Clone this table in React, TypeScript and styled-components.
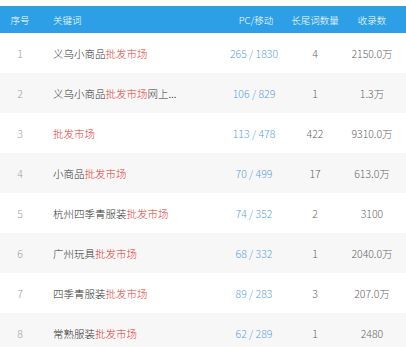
import * as React from 'react';
import styled, { createGlobalStyle } from 'styled-components';

const GlobalStyle = createGlobalStyle`
  body {
    margin: 0;
    background: #ffffff;
    font-family: "Noto Sans CJK SC", "Noto Sans", sans-serif;
  }
`;

interface Row {
  prefix: string;
  suffix?: string;
  pc: number;
  mobile: number;
  longTail: number;
  indexed: string;
}

const rows: Row[] = [
  { prefix: '义乌小商品', pc: 265, mobile: 1830, longTail: 4, indexed: '2150.0万' },
  { prefix: '义乌小商品', suffix: '网上...', pc: 106, mobile: 829, longTail: 1, indexed: '1.3万' },
  { prefix: '', pc: 113, mobile: 478, longTail: 422, indexed: '9310.0万' },
  { prefix: '小商品', pc: 70, mobile: 499, longTail: 17, indexed: '613.0万' },
  { prefix: '杭州四季青服装', pc: 74, mobile: 352, longTail: 2, indexed: '3100' },
  { prefix: '广州玩具', pc: 68, mobile: 332, longTail: 1, indexed: '2040.0万' },
  { prefix: '四季青服装', pc: 89, mobile: 283, longTail: 3, indexed: '207.0万' },
  { prefix: '常熟服装', pc: 62, mobile: 289, longTail: 1, indexed: '2480' },
];

const Page = styled.div`
  padding-top: 6px;
  width: 406px;
`;

const Grid = styled.div`
  display: grid;
  grid-template-columns: 40px 180px 72px 46px 68px;
  align-items: center;
  font-weight: 300;
`;

const Header = styled(Grid)`
  height: 27px;
  background: #2d9fe6;
  color: #ffffff;
  font-size: 9.5px;
`;

const HeadCell = styled.div<{ $left?: boolean }>`
  display: flex;
  justify-content: ${p => (p.$left ? 'flex-start' : 'center')};
  padding-left: ${p => (p.$left ? '13px' : '0')};
  white-space: nowrap;
`;

const BodyRow = styled(Grid)<{ $striped: boolean }>`
  height: 40px;
  background: ${p => (p.$striped ? '#f7f7f7' : '#ffffff')};
  font-size: 10.5px;
`;

const Index = styled.div`
  text-align: center;
  color: #a0a0a0;
`;

const Keyword = styled.div`
  padding-left: 13px;
  color: #333333;
  white-space: nowrap;
`;

const Highlight = styled.span`
  color: #e5352f;
`;

const Traffic = styled.div`
  text-align: center;
  color: #5c9fdc;
  padding-right: 4px;
  white-space: nowrap;
`;

const Count = styled.div`
  text-align: center;
  color: #666666;
  white-space: nowrap;
`;

const App = () => (
  <Page>
    <GlobalStyle />
    <Header>
      <HeadCell>序号</HeadCell>
      <HeadCell $left>关键词</HeadCell>
      <HeadCell>PC/移动</HeadCell>
      <HeadCell>长尾词数量</HeadCell>
      <HeadCell>收录数</HeadCell>
    </Header>
    {rows.map((r, i) => (
      <BodyRow key={i} $striped={i % 2 === 1}>
        <Index>{i + 1}</Index>
        <Keyword>
          {r.prefix}
          <Highlight>批发市场</Highlight>
          {r.suffix}
        </Keyword>
        <Traffic>{r.pc} / {r.mobile}</Traffic>
        <Count>{r.longTail}</Count>
        <Count>{r.indexed}</Count>
      </BodyRow>
    ))}
  </Page>
);

export default App;
